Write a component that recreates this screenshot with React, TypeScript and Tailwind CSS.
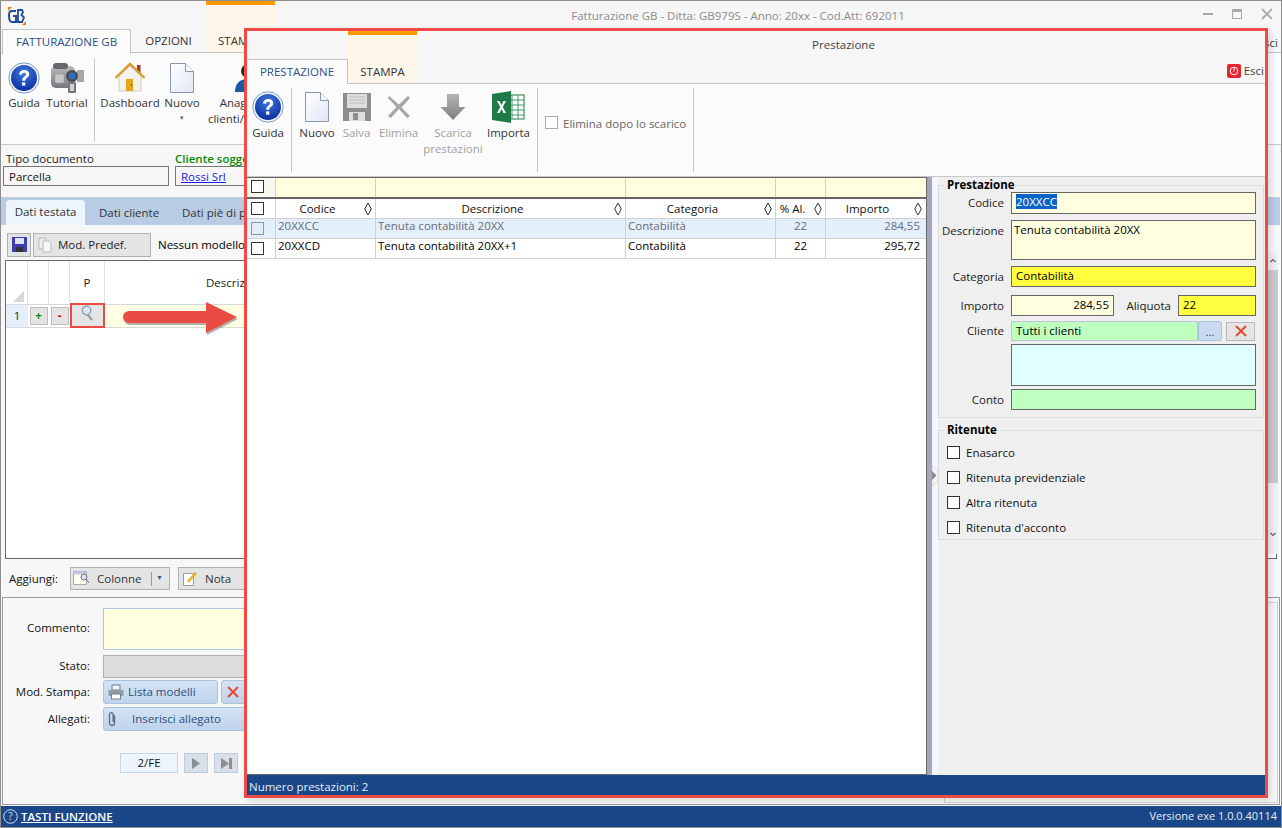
import React from "react";

const Help = ({ s = 32 }: { s?: number }) => (
  <svg width={s} height={s} viewBox="0 0 32 32">
    <defs>
      <radialGradient id="hg" cx="50%" cy="30%" r="70%">
        <stop offset="0" stopColor="#3f7ae0" />
        <stop offset="1" stopColor="#0b2f9c" />
      </radialGradient>
    </defs>
    <circle cx="16" cy="16" r="15.2" fill="#f4f7fd" stroke="#7b98cf" strokeWidth="1" />
    <circle cx="16" cy="16" r="13" fill="url(#hg)" />
    <path d="M11 12.6c.3-3 2.4-4.5 5.2-4.5 3 0 5 1.6 5 4.1 0 3.5-4 3.6-4 6.6h-3c0-4.3 3.8-4.2 3.8-6.5 0-1-.8-1.6-1.9-1.6-1.2 0-2 .7-2.2 2z" fill="#fff" />
    <rect x="14.1" y="20.4" width="3.2" height="3.2" fill="#fff" />
  </svg>
);
const Camera = () => (
  <svg width="34" height="30" viewBox="0 0 34 30">
    <defs>
      <linearGradient id="cm" x1="0" y1="0" x2="0" y2="1">
        <stop offset="0" stopColor="#b9babc" />
        <stop offset="1" stopColor="#77797d" />
      </linearGradient>
    </defs>
    <rect x="1" y="3" width="24" height="22" rx="5" fill="url(#cm)" />
    <rect x="3" y="0" width="15" height="6" rx="3" fill="#64676b" />
    <rect x="5" y="11" width="9" height="9" fill="#c6c7c9" stroke="#8b8d90" strokeWidth=".5" />
    <rect x="27" y="7" width="7" height="12" fill="#a5a7aa" />
    <circle cx="22" cy="13" r="6" fill="#4a4c50" />
    <circle cx="22" cy="13" r="3.400" fill="#2b6fc4" />
    <rect x="18" y="19" width="8" height="11" rx="1" fill="#76787c" />
    <rect x="20" y="21" width="4" height="7" fill="#cfd0d2" />
  </svg>
);
const House = () => (
  <svg width="32" height="32" viewBox="0 0 32 32">
    <rect x="23" y="3" width="3.5" height="8" fill="#a33a2c" />
    <path d="M5 14 16 4l11 10v15H5z" fill="#f4f2ec" stroke="#b5b0a4" strokeWidth=".6" />
    <path d="M1.5 16 16 2l14.5 14" fill="none" stroke="#d99a2b" strokeWidth="2.4" />
    <rect x="12" y="17" width="7" height="12" fill="#e8a616" />
    <rect x="17" y="22" width="1" height="2" fill="#6b4a00" />
  </svg>
);
const Page = () => (
  <svg width="24" height="30" viewBox="0 0 24 30">
    <defs>
      <linearGradient id="pg" x1="0" y1="0" x2="1" y2="1">
        <stop offset="0" stopColor="#fff" />
        <stop offset="1" stopColor="#dfe6f5" />
      </linearGradient>
    </defs>
    <path d="M.5.5h15l8 8v21H.5z" fill="url(#pg)" stroke="#8a96ad" />
    <path d="M15.5.5v8h8" fill="#fff" stroke="#8a96ad" />
  </svg>
);
const Person = () => (
  <svg width="28" height="32" viewBox="0 0 28 32">
    <circle cx="14" cy="9" r="7" fill="#2d2a28" />
    <path d="M1 30c0-9 5-13 13-13s13 4 13 13z" fill="#1a5aa8" />
  </svg>
);
const Floppy = () => (
  <svg width="28" height="28" viewBox="0 0 28 28">
    <path d="M0 0h28v28H0z" fill="#8e8e8e" />
    <rect x="4" y="1" width="20" height="14" fill="#dedede" />
    <path d="M6 4h16M6 7h16M6 10h16" stroke="#bdbdbd" strokeWidth="1" />
    <rect x="6" y="19" width="16" height="9" fill="#dedede" />
    <rect x="10" y="20" width="5" height="7" fill="#8e8e8e" />
  </svg>
);
const BigX = () => (
  <svg width="24" height="24" viewBox="0 0 24 24">
    <path d="M2 1l10 8.5L21 1l2 2-8.5 9.5L23 21l-3 2-8-9-8 9-3-2 8.5-9L1 3z" fill="#a6a6a6" />
  </svg>
);
const DownArrow = () => (
  <svg width="26" height="28" viewBox="0 0 26 28">
    <defs>
      <linearGradient id="da" x1="0" y1="0" x2="0" y2="1">
        <stop offset="0" stopColor="#b4b4b4" />
        <stop offset="1" stopColor="#7e7e7e" />
      </linearGradient>
    </defs>
    <path d="M7 1h12v13h6.500L13 27 .5 14H7z" fill="url(#da)" />
  </svg>
);
const Excel = () => (
  <svg width="33" height="32" viewBox="0 0 33 32">
    <rect x="14" y="4" width="18" height="24" fill="#fff" stroke="#1f7a47" />
    <path d="M14 9h18M14 14h18M14 19h18M14 24h18M20 4v24M26 4v24" stroke="#3c9a66" strokeWidth="1" />
    <path d="M0 3 19 0v32L0 29z" fill="#1f7a47" />
    <path d="m5 10 2.400 0L9.500 14l2-4H14l-3.200 6 3.200 6h-2.500l-2-4-2 4H5l3.300-6z" fill="#fff" />
  </svg>
);
const Magnifier = () => (
  <svg width="14" height="16" viewBox="0 0 14 16">
    <path d="m6 9 5 6" stroke="#9a9a9a" strokeWidth="2" />
    <circle cx="5.500" cy="5.500" r="4.300" fill="#dbe6f2" stroke="#8e9aa8" strokeWidth="1.200" />
  </svg>
);
const SmallX = ({ c = "#e8432e" }: { c?: string }) => (
  <svg width="12" height="12" viewBox="0 0 12 12">
    <path d="M1 1l10 10M11 1 1 11" stroke={c} strokeWidth="1.800" />
  </svg>
);
const Printer = () => (
  <svg width="16" height="16" viewBox="0 0 16 16">
    <rect x="4" y="1" width="8" height="5" fill="#eef1f5" stroke="#6f7d8c" />
    <rect x=".5" y="6" width="15" height="6" rx="1" fill="#8f9aa7" />
    <rect x="3.500" y="10" width="9" height="5" fill="#fff" stroke="#6f7d8c" />
  </svg>
);
const Clip = () => (
  <svg width="10" height="16" viewBox="0 0 10 16">
    <path d="M7.500 4v8a2.500 2.500 0 0 1-5 0V3.500a1.800 1.800 0 0 1 3.600 0V11" fill="none" stroke="#5e6a78" strokeWidth="1.300" />
  </svg>
);

const Tick = ({ dim = false }: { dim?: boolean }) => (
  <span className={`block w-[13px] h-[13px] border ${dim ? "border-[#8d959e] bg-[#e3edf6]" : "border-[#333] bg-white"}`} />
);

const Sort = () => (
  <svg width="8" height="14" viewBox="0 0 8 14" className="absolute right-[3px] top-[3px]">
    <path d="M4 1 7.300 7 4 13 .7 7z" fill="#fff" stroke="#333" strokeWidth="1" />
  </svg>
);

const RB = ({ w, icon, label, dim, h = "h-[34px]" }: { w: string; icon: React.ReactNode; label: React.ReactNode; dim?: boolean; h?: string }) => (
  <div className={`${w} flex flex-col items-center shrink-0`}>
    <div className={`${h} flex items-center justify-center`}>{icon}</div>
    <div className={`text-center leading-[16px] whitespace-nowrap ${dim ? "text-[#a0a0a0]" : "text-[#333]"}`}>{label}</div>
  </div>
);

const Cols = ["w-[28px]", "w-[100px]", "w-[250px]", "w-[150px]", "w-[50px]", "w-[101px]"];

const Row = ({ sel, vals }: { sel?: boolean; vals: string[] }) => (
  <div className={`flex h-[20px] border-b border-[#d0d0d0] items-center ${sel ? "bg-[#e3effa] text-[#6b6b78] border-[#c5d5e5]" : "bg-white text-black"}`}>
    <div className={`${Cols[0]} flex justify-start pl-[4px]`}><Tick dim={sel} /></div>
    <div className={`${Cols[1]} h-full border-l border-[#d0d0d0] pl-[2px] leading-[14px]`}>{vals[0]}</div>
    <div className={`${Cols[2]} h-full border-l border-[#d0d0d0] pl-[2px] leading-[14px]`}>{vals[1]}</div>
    <div className={`${Cols[3]} h-full border-l border-[#d0d0d0] pl-[2px] leading-[14px]`}>{vals[2]}</div>
    <div className={`${Cols[4]} h-full border-l border-[#d0d0d0] text-center leading-[14px]`}>{vals[3]}</div>
    <div className={`${Cols[5]} h-full border-l border-[#d0d0d0] text-right pr-[6px] leading-[14px]`}>{vals[4]}</div>
  </div>
);

const Lab = ({ children, w = "w-[65px]" }: { children: React.ReactNode; w?: string }) => (
  <div className={`${w} shrink-0 text-right text-[#222] leading-[16px]`}>{children}</div>
);
const Inp = ({ cls, children }: { cls: string; children?: React.ReactNode }) => (
  <div className={`border border-[#666] px-[4px] leading-[17px] text-black ${cls}`}>{children}</div>
);
const CheckRow = ({ t }: { t: string }) => (
  <div className="flex items-center h-[25px] gap-[6px]"><Tick /><span className="text-[#111]">{t}</span></div>
);

const BlueBtn = ({ w, children }: { w: string; children: React.ReactNode }) => (
  <div className={`${w} h-[24px] rounded-[3px] border border-[#a9c3de] bg-gradient-to-b from-[#d4e3f4] to-[#bed3ec] flex items-center text-[#2d4f78]`}>{children}</div>
);

export default function App() {
  return (
    <div className="relative w-[1282px] h-[828px] overflow-hidden bg-[#f7f7f7] text-[11.5px] text-[#222]" style={{ fontFamily: '"Open Sans", "Liberation Sans", sans-serif' }}>
      {/* background window */}
      <div className="w-full h-full flex flex-col border border-[#8e8e8e]">
        <div className="h-[28px] flex shrink-0 bg-[#f6f6f6] relative">
          <div className="w-[205px] pl-[7px] pt-[6px]">
            <svg width="18" height="18" viewBox="0 0 18 18">
              <path d="M0 0h4L0 4zM18 18h-4l4-4z" fill="#f07a1a" />
              <path d="M8 4H3.500C2 4 1 5.500 1 8.500S2 15 4 15h4V9H5" fill="none" stroke="#1f4f96" strokeWidth="2" />
              <path d="M10 3h4l1 2-1.500 3L16 10.500 14 15h-4z" fill="none" stroke="#1f4f96" strokeWidth="1.800" />
            </svg>
          </div>
          <div className="w-[69px] border-t-[4px] border-[#ff9900] bg-[#fff6ea]" />
          <div className="flex-1 text-center text-[#8c8c8c] pt-[6px] pr-[20px] -ml-[60px]">Fatturazione GB - Ditta: GB979S - Anno: 20xx - Cod.Att: 692011</div>
          <div className="absolute right-[8px] top-[7px] flex items-center gap-[19px]">
            <div className="w-[10px] h-[2px] bg-[#aaa]" />
            <div className="w-[10px] h-[10px] border border-[#aaa] border-t-[3px]" />
            <SmallX c="#aaa" />
          </div>
        </div>
        <div className="h-[24px] flex shrink-0 bg-[#f6f6f6] border-b border-[#c4c4c4] relative">
          <div className="ml-[1px] w-[129px] h-[25px] border border-b-0 border-[#c4c4c4] bg-[#fbfbfb] text-[#2d4f85] text-center leading-[23px]">FATTURAZIONE GB</div>
          <div className="w-[75px] text-center leading-[24px] text-[#333]">OPZIONI</div>
          <div className="w-[69px] bg-[#fff6ea] pl-[12px] leading-[24px] text-[#333]">STAMPA</div>
          <div className="absolute right-[3px] top-[5px] text-[#444]">Esci</div>
        </div>
        <div className="h-[92px] shrink-0 bg-[#fbfbfb] border-b border-[#c8c8c8] flex pt-[8px]">
          <RB w="w-[46px]" icon={<Help />} label="Guida" />
          <RB w="w-[40px]" icon={<Camera />} label="Tutorial" />
          <div className="ml-[7px] w-px h-[84px] -mt-[3px] bg-[#c8c8c8] mr-[6px]" />
          <RB w="w-[58px]" icon={<House />} label="Dashboard" />
          <RB w="w-[46px]" icon={<Page />} label={<>Nuovo<div className="text-[7px] leading-[14px] text-[#666]">▾</div></>} />
          <RB w="w-[86px]" icon={<Person />} label={<>Anagrafica<br />clienti/fornitori</>} />
        </div>
        {/* doc */}
        <div className="h-[52px] shrink-0 flex gap-[6px] pl-[2px] pt-[6px]">
          <div className="w-[166px]">
            <div className="leading-[15px] pl-[3px]">Tipo documento</div>
            <div className="border border-[#777] h-[20px] pl-[5px] leading-[20px] text-[#111]">Parcella</div>
          </div>
          <div className="w-[300px]">
            <div className="leading-[15px] font-semibold text-[#078a07]">Cliente soggetto</div>
            <div className="border border-[#777] h-[20px] pl-[5px] leading-[20px] text-[#1a1ae6] underline">Rossi Srl</div>
          </div>
        </div>
        <div className="h-[28px] shrink-0 bg-[#b8cce4] flex items-end pl-[5px] mr-[1px] whitespace-nowrap">
          <div className="w-[79px] h-[25px] rounded-t-[4px] bg-[#edf4fb] text-center leading-[24px] text-[#333]">Dati testata</div>
          <div className="w-[96px] pl-[14px] leading-[26px] h-[25px] text-[#333]">Dati cliente</div>
          <div className="w-[100px] pl-[1px] leading-[26px] h-[25px] text-[#333]">Dati piè di pagina</div>
        </div>
        <div className="h-[35px] shrink-0 flex items-center pl-[6px] pt-[4px] gap-[2px]">
          <div className="w-[24px] h-[24px] border border-[#b0b0b0] bg-[#e4e4e4] flex items-center justify-center">
            <svg width="15" height="15" viewBox="0 0 15 15"><path d="M0 0h15v15H0z" fill="#3c3cb4" /><rect x="3" y="1" width="9" height="6" fill="#dfe3f6" /><rect x="4" y="10" width="7" height="5" fill="#333" /></svg>
          </div>
          <div className="w-[118px] h-[24px] border border-[#b0b0b0] bg-[#e4e4e4] flex items-center pl-[4px] gap-[6px] text-[#222]">
            <svg width="14" height="16" viewBox="0 0 14 16"><path d="M1 1h7v11H1z" fill="#eee" stroke="#bbb" /><path d="M5 4h6l2 2v9H5z" fill="#f7f7f7" stroke="#bbb" /></svg>
            Mod. Predef.
          </div>
          <div className="ml-[5px] whitespace-nowrap text-black">Nessun modello</div>
        </div>
        <div className="relative h-[299px] shrink-0 flex ml-[4px] mr-[4px] border border-[#666] bg-white flex-col">
          <div className="h-[44px] flex border-b border-[#d8d8d8] shrink-0">
            <div className="w-[22px] border-r border-[#e0e0e0] flex items-end justify-end pb-[2px] pr-[3px]">
              <svg width="11" height="11" viewBox="0 0 11 11"><path d="M11 0v11H0z" fill="#d6d6d6" /></svg>
            </div>
            <div className="w-[21px] border-r border-[#e0e0e0]" />
            <div className="w-[21px] border-r border-[#e0e0e0]" />
            <div className="w-[35px] border-r border-[#e0e0e0] text-center leading-[43px] text-[#222]">P</div>
            <div className="flex-1 pl-[101px] leading-[43px] text-[#222]">Descrizione</div>
          </div>
          <div className="h-[23px] flex border-b border-[#d8d8d8] bg-[#ffffe6] shrink-0">
            <div className="w-[22px] bg-[#e4eff9] text-center leading-[22px] text-[#222]">1</div>
            <div className="w-[21px] flex items-center justify-center bg-white"><span className="w-[18px] h-[18px] border border-[#bbb] bg-[#e4e4e4] text-center leading-[15px] text-[#0a8a0a] font-bold">+</span></div>
            <div className="w-[21px] flex items-center justify-center bg-white"><span className="w-[18px] h-[18px] border border-[#bbb] bg-[#e4e4e4] text-center leading-[15px] text-[#e00000] font-bold">-</span></div>
            <div className="w-[35px] border-2 border-[#e84a45] bg-[#e4e4e4] flex justify-center items-start -mt-[2px] h-[25px]"><Magnifier /></div>
          </div>
        </div>
        <div className="h-[38px] shrink-0 flex items-center pl-[8px] pt-[1px] text-[#111]">
          <span className="w-[61px]">Aggiungi:</span>
          <div className="w-[100px] h-[23px] border border-[#b0b0b0] bg-[#e4e4e4] flex items-center pl-[2px]">
            <svg width="17" height="15" viewBox="0 0 17 15"><path d="M.5.5h13v13H.5z" fill="#fffdf0" stroke="#aab" /><path d="M.5.5h13v3H.5z" fill="#c2cbe0" /><circle cx="11" cy="6" r="3" fill="#dbe6f2" stroke="#777" /><path d="m13 8 3 4" stroke="#777" /></svg>
            <span className="ml-[7px] text-[#333] w-[54px]">Colonne</span>
            <span className="w-px h-[14px] bg-[#999]" />
            <span className="ml-[4px] text-[7px] text-[#44586e]">▼</span>
          </div>
          <div className="ml-[8px] w-[80px] h-[23px] border border-[#b0b0b0] bg-[#e4e4e4] flex items-center pl-[4px]">
            <svg width="14" height="15" viewBox="0 0 14 15"><path d="M.5 2.500h10v12H.5z" fill="#fff" stroke="#999" /><path d="m4 10 8-9 2 1.500-8 9z" fill="#e8b02c" /></svg>
            <span className="ml-[8px] text-[#333]">Nota</span>
          </div>
        </div>
        <div className="relative flex-1 mx-px border border-[#9a9a9a] mb-[1px] flex flex-col pt-[9px] bg-[#f7f7f7]">
          <div className="absolute left-[941px] right-[1px] top-[4px] bottom-[1px] border border-[#d0d0d0]" />
          <div className="flex items-center h-[43px]">
            <div className="w-[87px] text-right text-[#111] -mt-[2px]">Commento:</div>
            <div className="ml-[13px] w-[200px] h-[42px] bg-[#ffffe0] border border-[#b0c8e4]" />
          </div>
          <div className="flex items-center h-[23px] mt-[5px]">
            <div className="w-[87px] text-right text-[#111] -mt-[2px]">Stato:</div>
            <div className="ml-[13px] w-[200px] h-[23px] bg-[#dcdcdc] border border-[#b0b0b0]" />
          </div>
          <div className="flex items-center h-[24px] mt-[2px]">
            <div className="w-[87px] text-right text-[#111]">Mod. Stampa:</div>
            <div className="ml-[13px] flex gap-[3px]">
              <BlueBtn w="w-[115px]"><span className="ml-[4px] mr-[4px] flex"><Printer /></span>Lista modelli</BlueBtn>
              <BlueBtn w="w-[40px]"><span className="ml-[5px] flex"><SmallX /></span></BlueBtn>
            </div>
          </div>
          <div className="flex items-center h-[24px] mt-[3px]">
            <div className="w-[87px] text-right text-[#111]">Allegati:</div>
            <div className="ml-[13px]"><BlueBtn w="w-[200px]"><span className="ml-[3px] mr-[15px] flex"><Clip /></span>Inserisci allegato</BlueBtn></div>
          </div>
          <div className="flex items-center h-[20px] mt-[22px] pl-[117px] gap-[6px]">
            <div className="w-[58px] h-[20px] bg-[#edf4fd] border border-[#c4d8ec] text-center leading-[17px] text-[#111]">2/FE</div>
            <div className="w-[24px] h-[20px] bg-[#d8dfe7] border border-[#b9cde2] flex items-center justify-center"><svg width="8" height="11" viewBox="0 0 8 11"><path d="M0 0l8 5.500L0 11z" fill="#8a8f95" /></svg></div>
            <div className="w-[24px] h-[20px] bg-[#d8dfe7] border border-[#b9cde2] flex items-center justify-center"><svg width="11" height="11" viewBox="0 0 11 11"><path d="M0 0l8 5.500L0 11z" fill="#8a8f95" /><rect x="8" width="3" height="11" fill="#8a8f95" /></svg></div>
          </div>
        </div>
        <div className="h-[21px] shrink-0 bg-[#1a4788] flex items-center justify-between pl-[2px] pr-[4px] text-white">
          <div className="flex items-center gap-[3px]">
            <svg width="15" height="15" viewBox="0 0 15 15"><circle cx="7.500" cy="7.500" r="6.800" fill="none" stroke="#cfe0f5" /><text x="7.500" y="11" textAnchor="middle" fontSize="10" fill="#cfe0f5">?</text></svg>
            <span className="underline font-semibold">TASTI FUNZIONE</span>
          </div>
          <span className="text-[#e6ecf5] text-[11px]">Versione exe 1.0.0.40114</span>
        </div>
      </div>

      {/* scroll of background window */}
      <div className="absolute left-[1268px] top-[252px] w-[10px] h-[302px] bg-[#f0f0f0] flex flex-col">
        <div className="h-[18px] flex items-center justify-center">
          <svg width="6" height="6" viewBox="0 0 6 6"><path d="M.5 4 3 1.500 5.500 4" fill="none" stroke="#666" strokeWidth="1.200" /></svg>
        </div>
        <div className="h-[213px] bg-[#c9c9c9]" />
        <div className="h-[71px] pt-[48px] flex items-start justify-center">
          <svg width="6" height="6" viewBox="0 0 6 6"><path d="M.5 2 3 4.500 5.500 2" fill="none" stroke="#666" strokeWidth="1.200" /></svg>
        </div>
      </div>

      {/* arrow */}
      <svg className="absolute left-[120px] top-[300px]" width="124" height="40" viewBox="0 0 124 40">
        <path d="M10 13h77V4l31 15-31 16v-10H10a6 6 0 0 1 0-12z" fill="#666" opacity=".5" />
        <path d="M9 11h77V2l31 15-31 16v-10H9a6 6 0 0 1 0-12z" fill="#e94b45" />
      </svg>

      {/* modal window */}
      <div className="absolute left-[244px] top-[28px] w-[1024px] h-[770px] border-[3px] border-[#ee4a46] bg-[#f6f6f6] flex flex-col shadow-[3px_3px_6px_rgba(0,0,0,0.12)]">
        <div className="h-[28px] shrink-0 flex relative">
          <div className="w-[101px]" />
          <div className="w-[69px] border-t-[4px] border-[#ff9900] bg-[#fff6ea]" />
          <div className="absolute left-0 right-0 top-[5px] text-center pl-[175px] text-[#444]">Prestazione</div>
        </div>
        <div className="h-[25px] shrink-0 flex border-b border-[#c4c4c4] relative">
          <div className="w-[101px] h-[25px] border border-l-0 border-b-0 border-[#c4c4c4] bg-[#fbfbfb] text-[#2d4f85] text-center leading-[24px]">PRESTAZIONE</div>
          <div className="w-[69px] bg-[#fff6ea] text-center leading-[25px] text-[#333]">STAMPA</div>
          <div className="absolute right-[1px] top-[3px] flex items-center gap-[3px] text-[#444]">
            <span className="w-[14px] h-[14px] rounded-[2px] bg-[#e8252e] flex items-center justify-center">
              <svg width="10" height="10" viewBox="0 0 10 10"><circle cx="5" cy="5" r="3.800" fill="none" stroke="#fff" /><path d="M5 2v3.500" stroke="#fff" /></svg>
            </span>
            Esci
          </div>
        </div>
        <div className="h-[93px] shrink-0 bg-[#fbfbfb] flex pt-[5px] border-b border-[#c8c8c8]">
          <RB w="w-[42px]" h="h-[36px]" icon={<Help />} label="Guida" />
          <div className="ml-[2px] w-px h-[84px] -mt-px bg-[#c8c8c8] mr-[5px]" />
          <RB w="w-[40px]" h="h-[36px]" icon={<Page />} label="Nuovo" />
          <RB w="w-[39px]" h="h-[36px]" dim icon={<Floppy />} label="Salva" />
          <RB w="w-[45px]" h="h-[36px]" dim icon={<BigX />} label="Elimina" />
          <RB w="w-[64px]" h="h-[36px]" dim icon={<DownArrow />} label={<>Scarica<br />prestazioni</>} />
          <RB w="w-[47px]" h="h-[36px]" icon={<Excel />} label="Importa" />
          <div className="w-px h-[84px] -mt-px bg-[#c8c8c8] ml-[5px]" />
          <div className="flex items-start pt-[26px] pl-[7px] w-[155px] gap-[5px] text-[#666]">
            <span className="w-[13px] h-[13px] border border-[#aaa] bg-white mt-[1px] shrink-0" />
            <span className="whitespace-nowrap">Elimina dopo lo scarico</span>
          </div>
          <div className="w-px h-[84px] -mt-px bg-[#c8c8c8]" />
        </div>
        <div className="flex-1 flex min-h-0 bg-white">
          <div className="w-[680px] shrink-0 flex flex-col border-b border-r border-[#666]">
            <div className="h-[22px] shrink-0 flex bg-[#ffffe0] border-t border-[#666] border-b-2 border-b-[#666]">
              <div className={`${Cols[0]} bg-[#f8f8f0] flex items-start pt-[2px] pl-[4px]`}><Tick /></div>
              <div className={`${Cols[1]} border-l border-[#d0d0d0]`} />
              <div className={`${Cols[2]} border-l border-[#d0d0d0]`} />
              <div className={`${Cols[3]} border-l border-[#d0d0d0]`} />
              <div className={`${Cols[4]} border-l border-[#d0d0d0]`} />
              <div className={`w-[100px] border-l border-[#d0d0d0]`} />
            </div>
            <div className="h-[20px] shrink-0 flex items-center bg-white border-b border-[#d0d0d0] text-[#111]">
              <div className={`${Cols[0]} flex justify-start pl-[4px]`}><Tick /></div>
              {["Codice", "Descrizione", "Categoria", "% Al.", "Importo"].map((t, i) => (
                <div key={t} className={`${i === 4 ? "w-[100px]" : Cols[i + 1]} relative h-full border-l border-[#d0d0d0] text-center leading-[19px] pr-[16px]`}>{t}<Sort /></div>
              ))}
            </div>
            <Row sel vals={["20XXCC", "Tenuta contabilità 20XX", "Contabilità", "22", "284,55"]} />
            <Row vals={["20XXCD", "Tenuta contabilità 20XX+1", "Contabilità", "22", "295,72"]} />
          </div>
          <div className="w-[5px] shrink-0 bg-[#a5a5bd]" />
          <div className="w-[6px] shrink-0 bg-[#f4f6fd] relative">
            <svg className="absolute left-0 top-[288px]" width="7" height="21" viewBox="0 0 7 21"><path d="M0 0l6 5v11l-6 5z" fill="#f3f3f3" stroke="#c4c4c4" strokeWidth=".5" /><path d="M0 6l4.500 4.500L0 15z" fill="#8a8a8a" /></svg>
          </div>
          <div className="flex-1 bg-[#efefef] pr-[1px]">
            <div className="relative mt-[8px] h-[233px] border border-[#dcdcdc] pt-[6px]">
              <div className="absolute -top-[8px] left-[5px] px-[3px] bg-[#efefef] font-bold text-black leading-[14px]">Prestazione</div>
              <div className="flex items-center h-[22px] gap-[7px]"><Lab>Codice</Lab><Inp cls="w-[245px] h-[22px] bg-[#ffffe0]"><span className="bg-[#0a64c8] text-white">20XXCC</span></Inp></div>
              <div className="flex items-start mt-[6px] gap-[7px]"><div className="pt-[3px]"><Lab>Descrizione</Lab></div><Inp cls="w-[245px] h-[40px] bg-[#ffffe0] !px-[2px]">Tenuta contabilità 20XX</Inp></div>
              <div className="flex items-center mt-[6px] h-[21px] gap-[7px]"><Lab>Categoria</Lab><Inp cls="w-[245px] h-[21px] bg-[#ffff40]">Contabilità</Inp></div>
              <div className="flex items-center mt-[8px] h-[21px] gap-[7px]">
                <Lab>Importo</Lab>
                <Inp cls="w-[103px] h-[21px] bg-[#ffffe0] text-right">284,55</Inp>
                <span className="w-[50px] text-right text-[#222]">Aliquota</span>
                <Inp cls="w-[78px] h-[21px] bg-[#ffff40]">22</Inp>
              </div>
              <div className="flex items-center mt-[5px] h-[20px] gap-[7px]">
                <Lab>Cliente</Lab>
                <div className="flex items-center">
                  <div className="w-[187px] h-[20px] bg-[#bfffbf] border border-[#b8c8d8] pl-[4px] leading-[17px] text-black">Tutti i clienti</div>
                  <div className="w-[24px] h-[20px] rounded-[2px] border border-[#a9c3de] bg-[#c9daf0] text-center leading-[20px] text-[#2d4f78]">...</div>
                  <div className="ml-[4px] w-[29px] h-[19px] border border-[#bbb] bg-[#e4e4e4] flex items-center justify-center"><SmallX /></div>
                </div>
              </div>
              <div className="flex mt-[3px] gap-[7px]"><div className="w-[65px]" /><Inp cls="w-[245px] h-[42px] bg-[#e0ffff]" /></div>
              <div className="flex items-center mt-[3px] h-[21px] gap-[7px]"><Lab>Conto</Lab><Inp cls="w-[245px] h-[21px] bg-[#bfffbf]" /></div>
            </div>
            <div className="relative mt-[12px] h-[110px] border border-[#dcdcdc] pl-[8px] pt-[9px]">
              <div className="absolute -top-[8px] left-[5px] px-[3px] bg-[#efefef] font-bold text-black leading-[14px]">Ritenute</div>
              <CheckRow t="Enasarco" />
              <CheckRow t="Ritenuta previdenziale" />
              <CheckRow t="Altra ritenuta" />
              <CheckRow t="Ritenuta d'acconto" />
            </div>
          </div>
        </div>
        <div className="h-[20px] shrink-0 bg-[#1a4788] text-[#e6ecf5] pl-[2px] leading-[23px]">Numero prestazioni: 2</div>
      </div>
    </div>
  );
}
